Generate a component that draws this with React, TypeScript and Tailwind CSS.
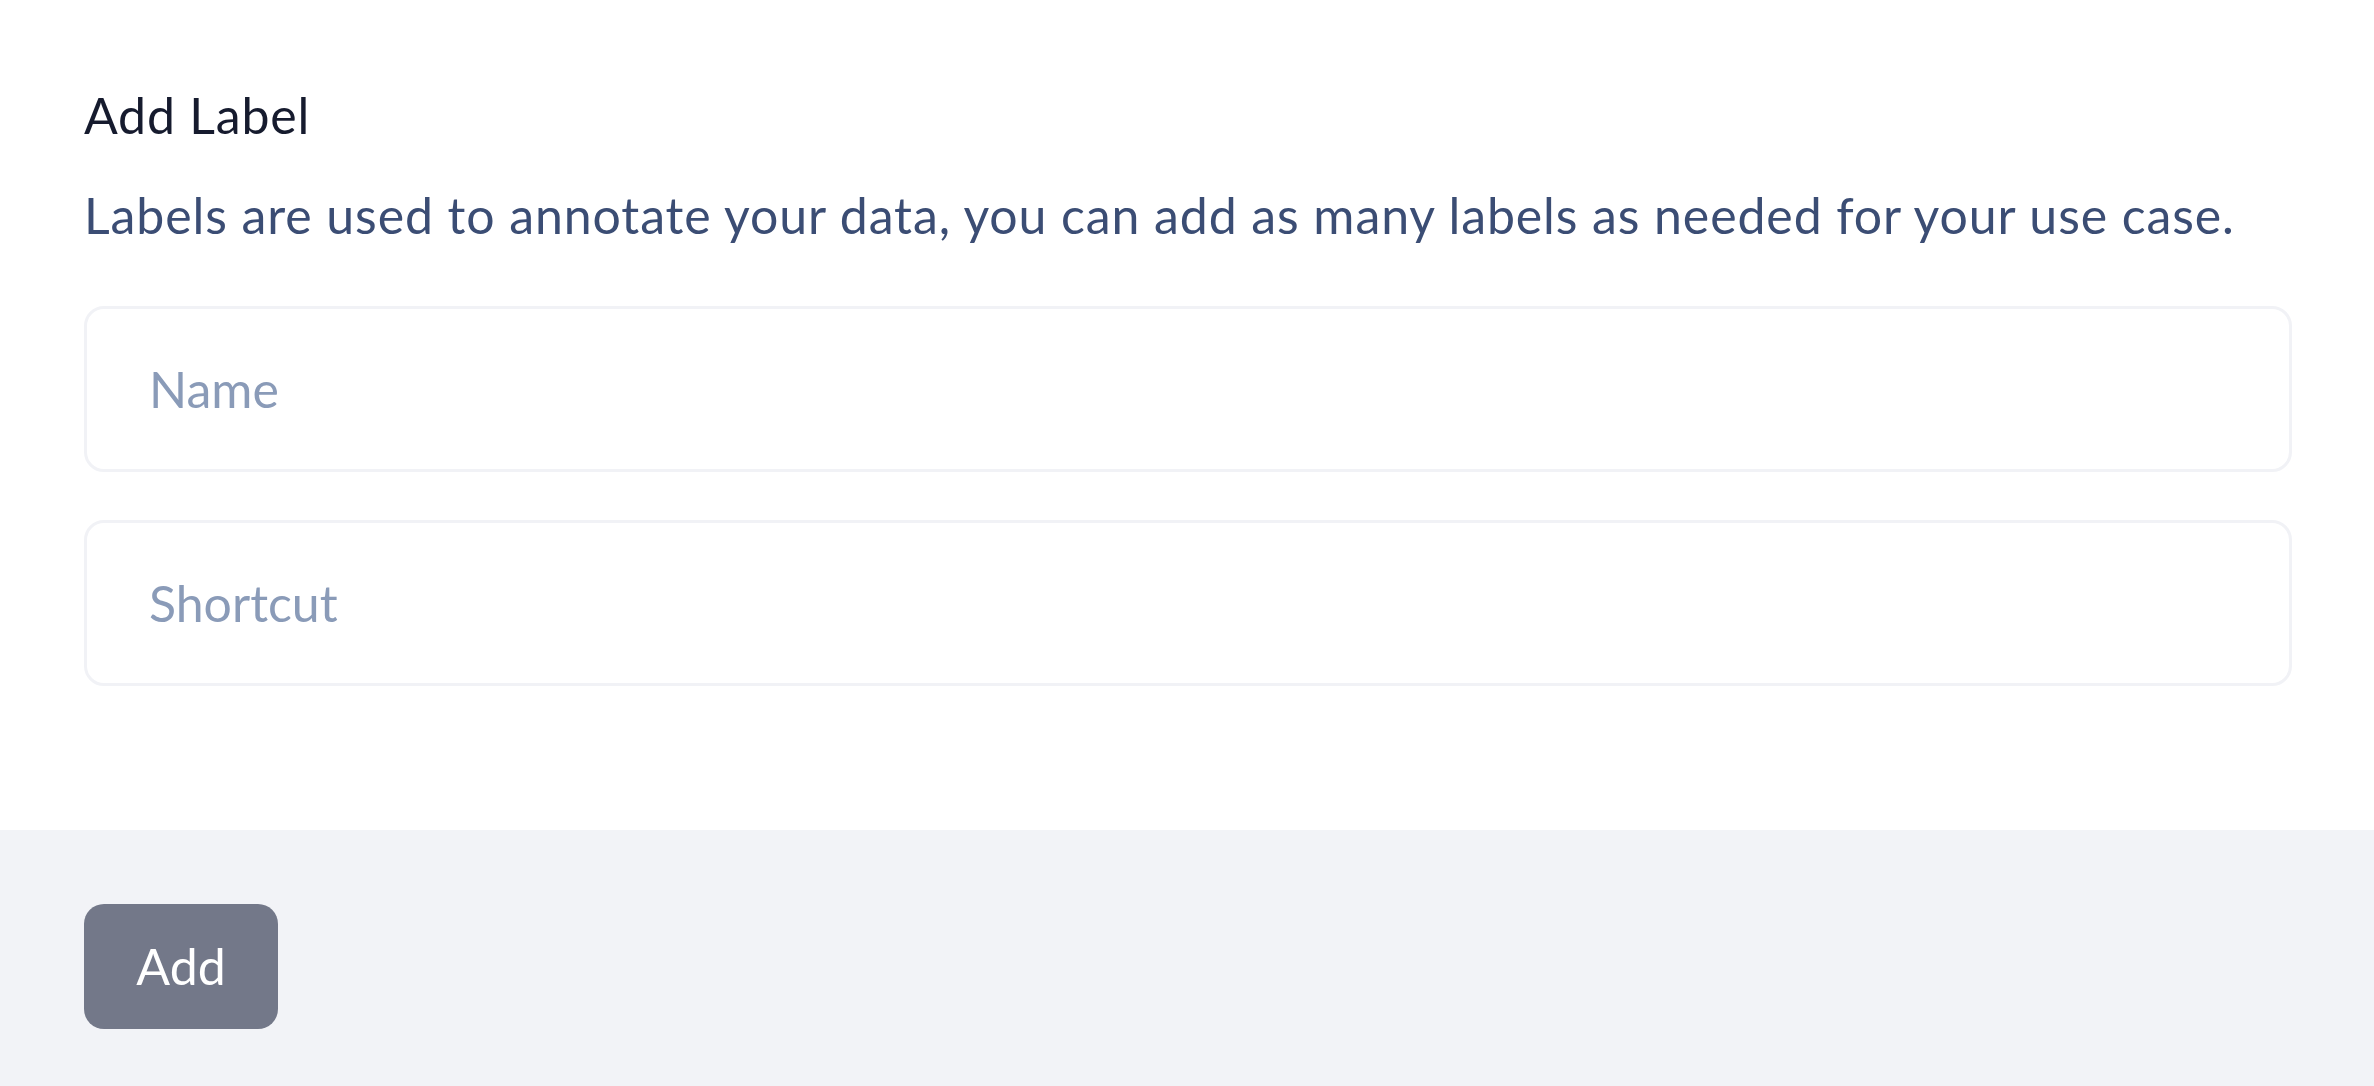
import { useState } from 'react';

const FONT = 'font-[Lato,"Liberation_Sans",sans-serif]';

export default function App() {
  const [name, setName] = useState('');
  const [shortcut, setShortcut] = useState('');

  return (
    <div className={`w-[2374px] h-[1086px] flex flex-col bg-white overflow-hidden ${FONT}`}>
      {/* Body */}
      <div className="flex flex-col pl-[84px] pr-[82px] pt-[85px]">
        <h2 className="text-[50px] leading-[60px] font-normal tracking-[0.8px] text-[#161b2e]">Add Label</h2>
        <p className="mt-[40px] text-[50px] leading-[60px] tracking-[0.9px] text-[#3b4d74]">
          Labels are used to annotate your data, you can add as many labels as needed for your use case.
        </p>

        <div className="mt-[61px] flex flex-col gap-[48px]">
          <input
            value={name}
            onChange={(e) => setName(e.target.value)}
            placeholder="Name"
            className="h-[166px] w-full rounded-[20px] border-[3px] border-[#f1f2f6] bg-white pl-[62px] text-[50px] text-[#161b2e] placeholder:text-[#8a9bb8] outline-none"
          />
          <input
            value={shortcut}
            onChange={(e) => setShortcut(e.target.value)}
            placeholder="Shortcut"
            className="h-[166px] w-full rounded-[20px] border-[3px] border-[#f1f2f6] bg-white pl-[62px] text-[50px] text-[#161b2e] placeholder:text-[#8a9bb8] outline-none"
          />
        </div>
      </div>

      {/* Footer */}
      <div className="mt-[144px] flex-1 bg-[#f2f3f7] pl-[84px] pt-[74px]">
        <button className="h-[125px] w-[194px] rounded-[20px] bg-[#737889] text-[50px] text-white">
          Add
        </button>
      </div>
    </div>
  );
}
